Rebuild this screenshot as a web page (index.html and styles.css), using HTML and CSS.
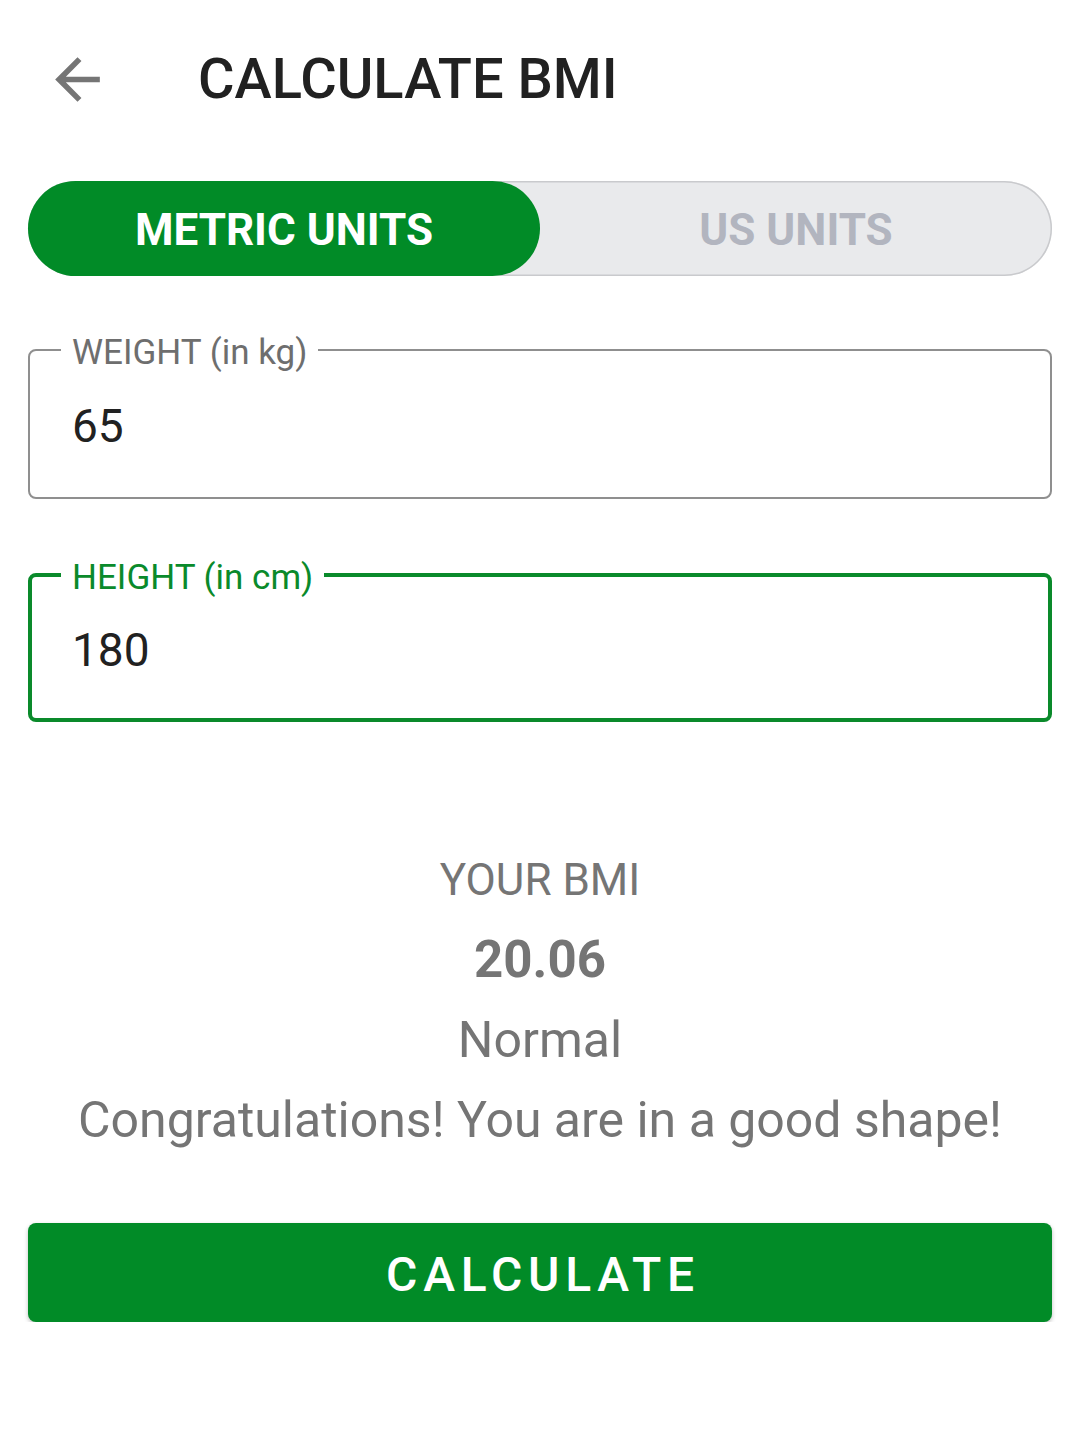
FILE: index.html
```html
<!DOCTYPE html>
<html>
<head>
<meta charset="utf-8">
<link rel="stylesheet" href="styles.css">
</head>
<body>
<div class="page">
  <header class="header">
    <svg class="back" viewBox="0 0 24 24" width="67" height="67"><path d="M20 11H7.83l5.59-5.59L12 4l-8 8 8 8 1.41-1.41L7.83 13H20v-2z" fill="#757575"/></svg>
    <h1 class="title">CALCULATE BMI</h1>
  </header>
  <main class="content">
    <div class="toggle">
      <div class="seg seg-active">METRIC UNITS</div>
      <div class="seg seg-idle">US UNITS</div>
    </div>
    <fieldset class="field field-idle">
      <legend class="label">WEIGHT (in kg)</legend>
      <div class="value">65</div>
    </fieldset>
    <fieldset class="field field-focus">
      <legend class="label">HEIGHT (in cm)</legend>
      <div class="value">180</div>
    </fieldset>
    <section class="result">
      <div class="r-title">YOUR BMI</div>
      <div class="r-value">20.06</div>
      <div class="r-type">Normal</div>
      <div class="r-desc">Congratulations! You are in a good shape!</div>
    </section>
    <button class="calc">CALCULATE</button>
  </main>
</div>
</body>
</html>
```
FILE: styles.css
```css
html, body {
  margin: 0;
  padding: 0;
  background: #ffffff;
}
body {
  font-family: Roboto, "Liberation Sans", sans-serif;
  color: #212121;
}
.page {
  width: 1080px;
}
.header {
  display: flex;
  align-items: center;
  height: 158px;
  padding-left: 44px;
}
.back {
  display: block;
  flex: none;
}
.title {
  margin: 0 0 0 87px;
  font-size: 56px;
  font-weight: 500;
  color: #212121;
  line-height: 1;
}
.content {
  padding: 0 28px;
}
.toggle {
  margin-top: 23px;
  height: 95px;
  display: flex;
  background: #e9eaec;
  border-radius: 48px;
  box-shadow: inset 0 0 0 1.5px #c9cacd;
}
.seg {
  display: flex;
  align-items: center;
  justify-content: center;
  font-size: 44px;
  font-weight: 700;
  border-radius: 48px;
  padding-top: 3px;
  box-sizing: border-box;
}
.seg-active {
  width: 512px;
  background: #018b27;
  color: #ffffff;
}
.seg-idle {
  flex: 1;
  color: #b2b5bf;
}
.field {
  margin: 51px 0 0;
  padding: 0 31px 0 31px;
  border-radius: 8px;
  min-width: 0;
}
.field-idle {
  border: 2px solid #8f8f8f;
}
.field-focus {
  margin-top: 53px;
  border: 4px solid #0a8a2b;
  padding-left: 29px;
}
.label {
  padding: 7px 11px 0;
  font-size: 35px;
  line-height: 38px;
}
.field-idle .label {
  color: #6e6e6e;
}
.field-focus .label {
  color: #0a8a2b;
}
.value {
  margin-left: 11px;
  font-size: 46px;
  line-height: 54px;
  color: #212121;
}
.field-idle .value {
  padding: 27px 0 44px;
}
.field-focus .value {
  padding: 26px 0 41px;
}
.result {
  margin-top: 128px;
  text-align: center;
  color: #757575;
}
.r-title {
  font-size: 44px;
  line-height: 60px;
}
.r-value {
  font-size: 51px;
  font-weight: 700;
  line-height: 60px;
  margin-top: 20px;
}
.r-type {
  font-size: 50px;
  line-height: 60px;
  margin-top: 20px;
}
.r-desc {
  font-size: 50px;
  line-height: 60px;
  margin-top: 20px;
}
.calc {
  display: flex;
  align-items: center;
  justify-content: center;
  width: 100%;
  height: 99px;
  margin-top: 73px;
  border: none;
  border-radius: 8px;
  background: #018b27;
  color: #ffffff;
  font-family: Roboto, "Liberation Sans", sans-serif;
  font-size: 48px;
  font-weight: 500;
  letter-spacing: 0.12em;
  box-shadow: 0 2px 4px rgba(0,0,0,0.25);
  padding: 3px 0 0 6px;
  box-sizing: border-box;
}
```
